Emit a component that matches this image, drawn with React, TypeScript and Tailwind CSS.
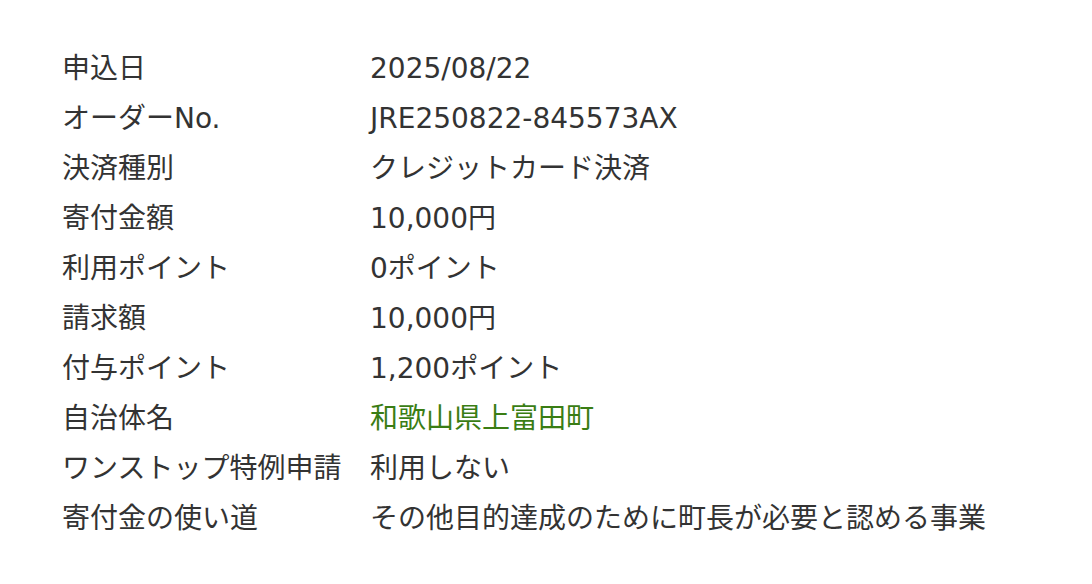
const rows: { label: string; value: string; green?: boolean }[] = [
  { label: "申込日", value: "2025/08/22" },
  { label: "オーダーNo.", value: "JRE250822-845573AX" },
  { label: "決済種別", value: "クレジットカード決済" },
  { label: "寄付金額", value: "10,000円" },
  { label: "利用ポイント", value: "0ポイント" },
  { label: "請求額", value: "10,000円" },
  { label: "付与ポイント", value: "1,200ポイント" },
  { label: "自治体名", value: "和歌山県上富田町", green: true },
  { label: "ワンストップ特例申請", value: "利用しない" },
  { label: "寄付金の使い道", value: "その他目的達成のために町長が必要と認める事業" },
];

export default function App() {
  return (
    <div className="min-h-[584px] w-[1092px] bg-white pl-[62px] pt-[44px] font-['DejaVu_Sans','Noto_Sans_CJK_JP',sans-serif] text-[28px] text-[#333333]">
      <dl className="grid grid-cols-[308px_1fr]">
        {rows.map((r) => (
          <div key={r.label} className="contents">
            <dt className="h-[50px] leading-[50px] whitespace-nowrap">{r.label}</dt>
            <dd className={`h-[50px] leading-[50px] whitespace-nowrap ${r.green ? "text-[#3a7d14]" : ""}`}>{r.value}</dd>
          </div>
        ))}
      </dl>
    </div>
  );
}
